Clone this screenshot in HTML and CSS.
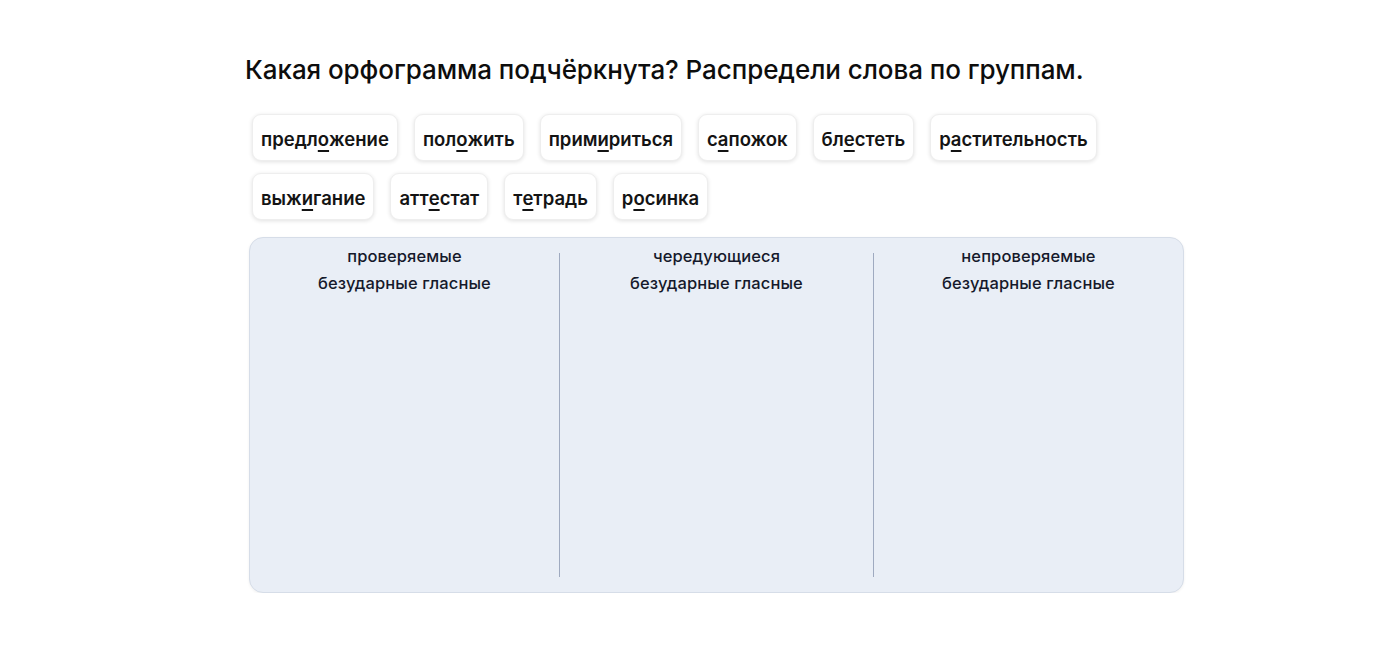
FILE: index.html
```html
<!DOCTYPE html>
<html lang="ru">
<head>
<meta charset="utf-8">
<link rel="stylesheet" href="styles.css">
</head>
<body>
<main class="task">
  <h1 class="title">Какая орфограмма подчёркнута? Распредели слова по группам.</h1>
  <div class="chips">
    <div class="chip">предл<u>о</u>жение</div>
    <div class="chip">пол<u>о</u>жить</div>
    <div class="chip">прим<u>и</u>риться</div>
    <div class="chip">с<u>а</u>пожок</div>
    <div class="chip">бл<u>е</u>стеть</div>
    <div class="chip">р<u>а</u>стительность</div>
    <div class="chip">выж<u>и</u>гание</div>
    <div class="chip">атт<u>е</u>стат</div>
    <div class="chip">т<u>е</u>традь</div>
    <div class="chip">р<u>о</u>синка</div>
  </div>
  <section class="board">
    <div class="col">
      <div class="col-title">проверяемые<br>безударные гласные</div>
    </div>
    <div class="col">
      <div class="col-title">чередующиеся<br>безударные гласные</div>
    </div>
    <div class="col">
      <div class="col-title">непроверяемые<br>безударные гласные</div>
    </div>
  </section>
</main>
</body>
</html>
```

FILE: styles.css
```css
html, body {
  margin: 0;
  padding: 0;
  background: #ffffff;
}
body {
  font-family: Inter, "Noto Sans", sans-serif;
  color: #111;
}
.task {
  width: 940px;
  margin-left: 245px;
  padding-top: 53px;
}
.title {
  margin: 0;
  font-size: 26px;
  line-height: 34px;
  font-weight: 500;
  color: #0d0d0d;
  letter-spacing: -0.07px;
}
.chips {
  display: flex;
  flex-wrap: wrap;
  column-gap: 16px;
  row-gap: 12px;
  width: 880px;
  margin-top: 27px;
  margin-left: 7px;
}
.chip {
  box-sizing: border-box;
  height: 47px;
  padding: 2px 8px 0;
  display: flex;
  align-items: center;
  font-size: 18.5px;
  font-weight: 600;
  color: #141414;
  background: #fff;
  border: 1px solid #eeeeee;
  border-radius: 9px;
  box-shadow: 0 1px 4px rgba(0, 0, 0, 0.12);
  letter-spacing: 0;
}
.chip u {
  text-decoration: underline;
  text-decoration-thickness: 2px;
  text-underline-offset: 4px;
}
.board {
  box-sizing: border-box;
  width: 935px;
  height: 356px;
  margin-top: 17px;
  margin-left: 4px;
  background: #e9eef6;
  border: 1px solid #d6dde8;
  border-radius: 14px;
  box-shadow: 0 1px 3px rgba(0, 0, 0, 0.06);
  display: grid;
  grid-template-columns: 309px 314px 1fr;
  padding: 15px 0;
}
.col {
  text-align: center;
}
.col + .col {
  border-left: 1px solid #9faac0;
}
.col-title {
  margin-top: -10px;
  font-size: 16.5px;
  line-height: 27px;
  font-weight: 500;
  color: #15192b;
  letter-spacing: 0.1px;
}
```
